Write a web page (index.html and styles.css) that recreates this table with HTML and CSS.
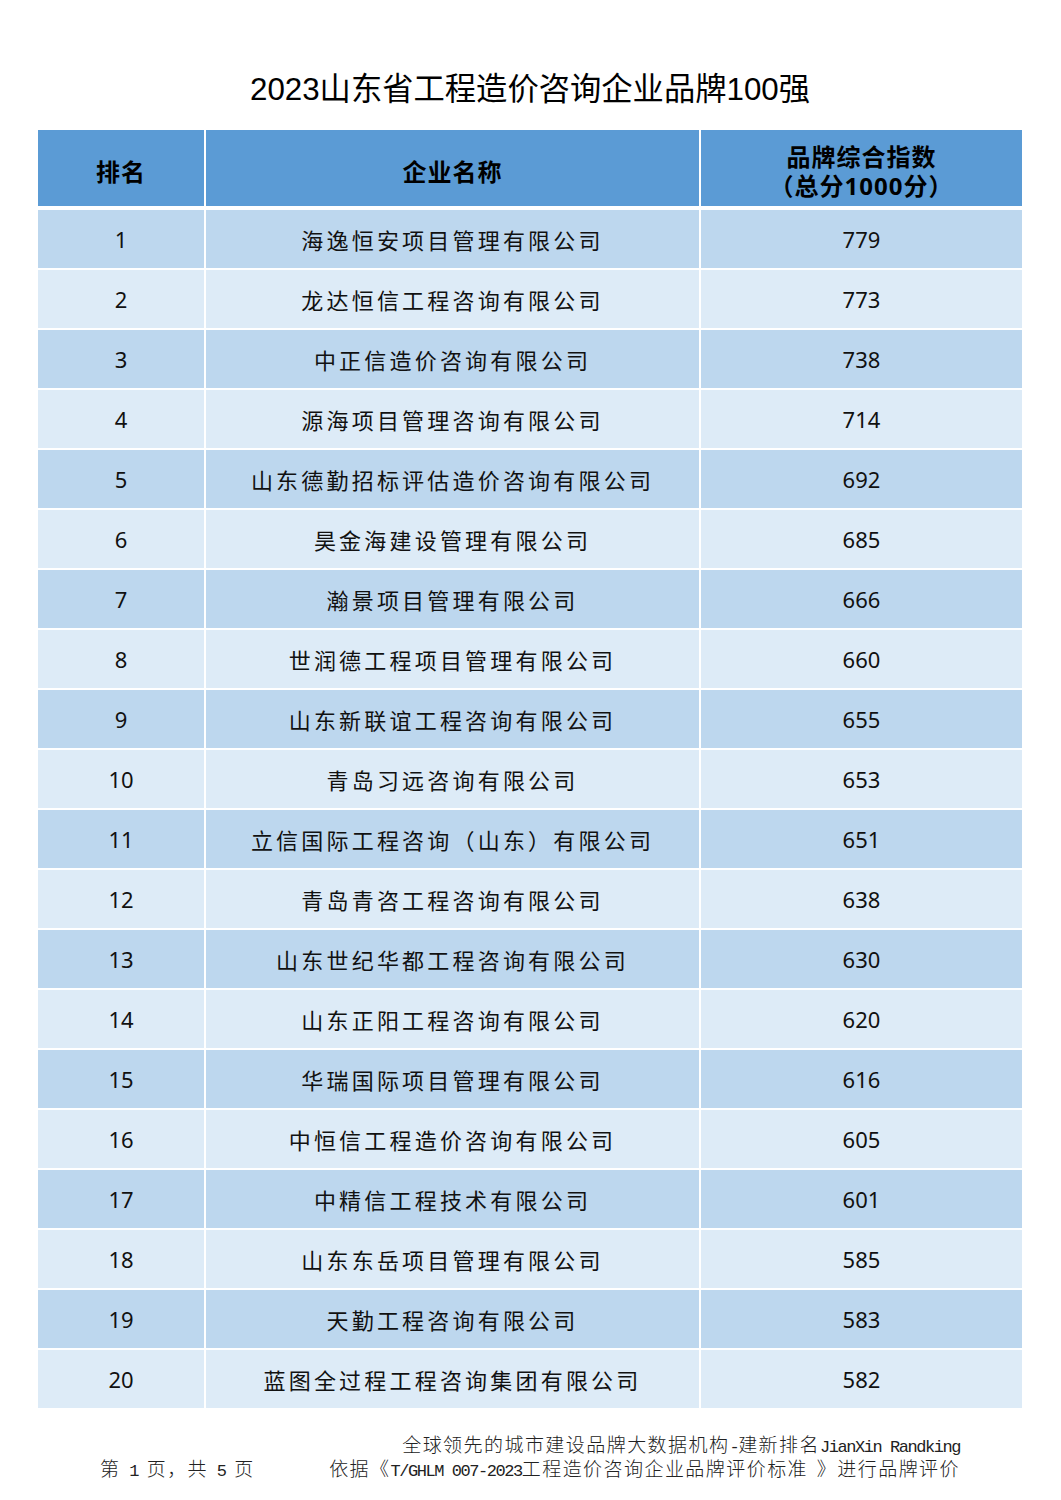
FILE: index.html
```html
<!DOCTYPE html>
<html lang="zh-CN">
<head>
<meta charset="utf-8">
<title>2023山东省工程造价咨询企业品牌100强</title>
<link rel="stylesheet" href="styles.css">
</head>
<body>
<div class="page">
  <h1 class="title">2023山东省工程造价咨询企业品牌100强</h1>
  <div class="table">
    <div class="row head">
      <div class="cell">排名</div>
      <div class="cell">企业名称</div>
      <div class="cell">品牌综合指数<br>（总分1000分）</div>
    </div>
    <div class="body">
      <div class="row odd"><div class="cell">1</div><div class="cell name">海逸恒安项目管理有限公司</div><div class="cell">779</div></div>
      <div class="row even"><div class="cell">2</div><div class="cell name">龙达恒信工程咨询有限公司</div><div class="cell">773</div></div>
      <div class="row odd"><div class="cell">3</div><div class="cell name">中正信造价咨询有限公司</div><div class="cell">738</div></div>
      <div class="row even"><div class="cell">4</div><div class="cell name">源海项目管理咨询有限公司</div><div class="cell">714</div></div>
      <div class="row odd"><div class="cell">5</div><div class="cell name">山东德勤招标评估造价咨询有限公司</div><div class="cell">692</div></div>
      <div class="row even"><div class="cell">6</div><div class="cell name">昊金海建设管理有限公司</div><div class="cell">685</div></div>
      <div class="row odd"><div class="cell">7</div><div class="cell name">瀚景项目管理有限公司</div><div class="cell">666</div></div>
      <div class="row even"><div class="cell">8</div><div class="cell name">世润德工程项目管理有限公司</div><div class="cell">660</div></div>
      <div class="row odd"><div class="cell">9</div><div class="cell name">山东新联谊工程咨询有限公司</div><div class="cell">655</div></div>
      <div class="row even"><div class="cell">10</div><div class="cell name">青岛习远咨询有限公司</div><div class="cell">653</div></div>
      <div class="row odd"><div class="cell">11</div><div class="cell name">立信国际工程咨询（山东）有限公司</div><div class="cell">651</div></div>
      <div class="row even"><div class="cell">12</div><div class="cell name">青岛青咨工程咨询有限公司</div><div class="cell">638</div></div>
      <div class="row odd"><div class="cell">13</div><div class="cell name">山东世纪华都工程咨询有限公司</div><div class="cell">630</div></div>
      <div class="row even"><div class="cell">14</div><div class="cell name">山东正阳工程咨询有限公司</div><div class="cell">620</div></div>
      <div class="row odd"><div class="cell">15</div><div class="cell name">华瑞国际项目管理有限公司</div><div class="cell">616</div></div>
      <div class="row even"><div class="cell">16</div><div class="cell name">中恒信工程造价咨询有限公司</div><div class="cell">605</div></div>
      <div class="row odd"><div class="cell">17</div><div class="cell name">中精信工程技术有限公司</div><div class="cell">601</div></div>
      <div class="row even"><div class="cell">18</div><div class="cell name">山东东岳项目管理有限公司</div><div class="cell">585</div></div>
      <div class="row odd"><div class="cell">19</div><div class="cell name">天勤工程咨询有限公司</div><div class="cell">583</div></div>
      <div class="row even"><div class="cell">20</div><div class="cell name">蓝图全过程工程咨询集团有限公司</div><div class="cell">582</div></div>
    </div>
  </div>
  <div class="footer">
    <div class="line pageno">第<span class="lat"> 1 </span>页，共<span class="lat"> 5 </span>页</div>
    <div class="notes">
      <div class="line">全球领先的城市建设品牌大数据机构<span class="lat">-</span>建新排名<span class="lat">JianXin Randking</span></div>
      <div class="line">依据《<span class="lat">T/GHLM 007-2023</span>工程造价咨询企业品牌评价标准<span class="lat"> </span>》进行品牌评价</div>
    </div>
  </div>
</div>
</body>
</html>
```
FILE: styles.css
```css
html, body {
  margin: 0;
  padding: 0;
  background: #ffffff;
}

.page {
  width: 1061px;
  height: 1500px;
  box-sizing: border-box;
  padding: 70px 39px 0 38px;
  color: #000;
}

.title {
  margin: 0;
  height: 40px;
  line-height: 40px;
  text-align: center;
  font-family: "Liberation Sans", "Noto Sans CJK SC", sans-serif;
  font-weight: 400;
  font-size: 31.3px;
  color: #000;
}

.table {
  margin-top: 20px;
  width: 984px;
}

.row {
  display: grid;
  grid-template-columns: 166px 493px 321px;
  column-gap: 2px;
}

.cell {
  display: flex;
  align-items: center;
  justify-content: center;
  text-align: center;
}

.head {
  height: 76px;
}

.head .cell {
  box-sizing: border-box;
  padding-top: 6px;
  background: #5b9bd5;
  font-family: "Noto Sans", "Noto Sans CJK SC", sans-serif;
  font-weight: 700;
  font-size: 24px;
  line-height: 29px;
  color: #000;
  letter-spacing: 1px;
}

.body {
  margin-top: 4px;
  display: flex;
  flex-direction: column;
  gap: 2px;
}

.body .row {
  height: 58px;
}

.body .cell {
  font-family: "Noto Sans", "Noto Sans CJK SC", sans-serif;
  font-size: 22px;
  color: #111;
}

.body .name {
  letter-spacing: 3.2px;
}

.odd .cell {
  background: #bdd7ee;
}

.even .cell {
  background: #ddebf7;
}

.footer {
  margin-top: 24px;
  display: flex;
  justify-content: space-between;
  align-items: flex-end;
  font-family: "Noto Sans CJK SC", sans-serif;
  font-size: 19px;
  font-weight: 300;
  color: #222;
  letter-spacing: 1.45px;
}

.line {
  height: 24px;
  line-height: 24px;
  white-space: pre;
}

.lat {
  font-family: "Liberation Mono", monospace;
  font-size: 17px;
  font-weight: 400;
  letter-spacing: -1.45px;
  line-height: 1;
}

.pageno {
  padding-left: 62px;
}

.notes {
  text-align: right;
  padding-right: 62px;
}
```
